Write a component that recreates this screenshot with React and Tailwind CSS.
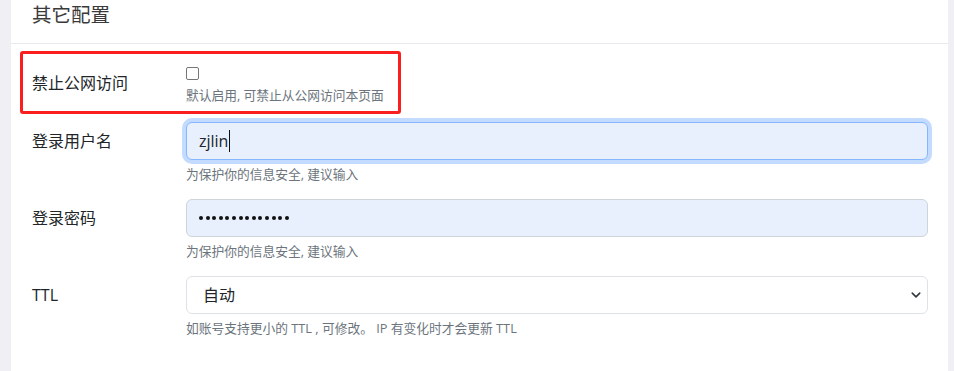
import React from 'react';

const font = "font-['Open_Sans','Noto_Sans_CJK_SC',sans-serif]";

function HelpText({ children }) {
    return <p className="mt-[5px] text-[12.75px] leading-[18px] text-[#6c757d]">{children}</p>;
}

export default function App() {
    return (
        <div className={`flex h-[371px] w-[954px] overflow-hidden bg-[#efeff4] pl-[11px] pr-[6px] ${font}`}>
            <div className="flex-1 bg-white">
                {/* Card header */}
                <div className="h-[44px] border-b border-[#e9e9ef] px-[21px]">
                    <h2 className="text-[19.5px] leading-[30px] text-[#3a3a3a]">其它配置</h2>
                </div>

                {/* Card body */}
                <div className="pt-[7px] pr-[20px]">
                    {/* Highlighted row */}
                    <div className="ml-[9px] flex h-[63px] w-[381px] rounded-[3px] border-[3px] border-[#fa1e1e] pl-[9px]">
                        <label className="w-[154px] pt-[17px] text-[16px] leading-[24px] text-[#212529]">禁止公网访问</label>
                        <div className="pt-[13px]">
                            <input type="checkbox" className="m-0 block h-[13px] w-[13px] appearance-none rounded-[2px] border border-[#767676] bg-white" />
                            <p className="mt-[6px] text-[12.75px] leading-[18px] text-[#6c757d]">默认启用, 可禁止从公网访问本页面</p>
                        </div>
                    </div>

                    {/* Username */}
                    <div className="ml-[21px] mt-[8px] flex">
                        <label className="w-[154px] shrink-0 pt-[7px] text-[16px] leading-[24px] text-[#212529]">登录用户名</label>
                        <div className="flex-1">
                            <div className="flex h-[38px] items-center rounded-[6px] border border-[#86b7fe] bg-[#e8f0fe] px-3 shadow-[0_0_0_4px_rgba(13,110,253,0.25)]">
                                <span className="text-[16px] leading-[24px] text-[#212529]">zjlin</span>
                                <span className="ml-[1px] h-[22px] w-px bg-[#111]" />
                            </div>
                            <HelpText>为保护你的信息安全, 建议输入</HelpText>
                        </div>
                    </div>

                    {/* Password */}
                    <div className="ml-[21px] mt-[16px] flex">
                        <label className="w-[154px] shrink-0 pt-[7px] text-[16px] leading-[24px] text-[#212529]">登录密码</label>
                        <div className="flex-1">
                            <div className="flex h-[38px] items-center gap-[2.6px] rounded-[6px] border border-[#ced4da] bg-[#e8f0fe] pl-[12px]">
                                {Array.from({ length: 14 }).map((_, i) => (
                                    <span key={i} className="h-[4px] w-[4px] rounded-full bg-[#111]" />
                                ))}
                            </div>
                            <HelpText>为保护你的信息安全, 建议输入</HelpText>
                        </div>
                    </div>

                    {/* TTL */}
                    <div className="ml-[21px] mt-[16px] flex">
                        <label className="w-[154px] shrink-0 pt-[7px] text-[16px] leading-[24px] text-[#212529]">TTL</label>
                        <div className="flex-1">
                            <div className="relative">
                                <select className="block h-[38px] w-full appearance-none rounded-[6px] border border-[#dee2e6] bg-white pl-[16px] text-[16px] text-[#212529] outline-none">
                                    <option>自动</option>
                                </select>
                                <svg className="pointer-events-none absolute right-[6px] top-[14px]" width="12" height="10" viewBox="0 0 16 16">
                                    <path d="M2 5l6 6 6-6" fill="none" stroke="#343a40" strokeWidth="2.5" strokeLinecap="round" strokeLinejoin="round" />
                                </svg>
                            </div>
                            <HelpText>如账号支持更小的 TTL , 可修改。 IP 有变化时才会更新 TTL</HelpText>
                        </div>
                    </div>
                </div>
            </div>
        </div>
    );
}
